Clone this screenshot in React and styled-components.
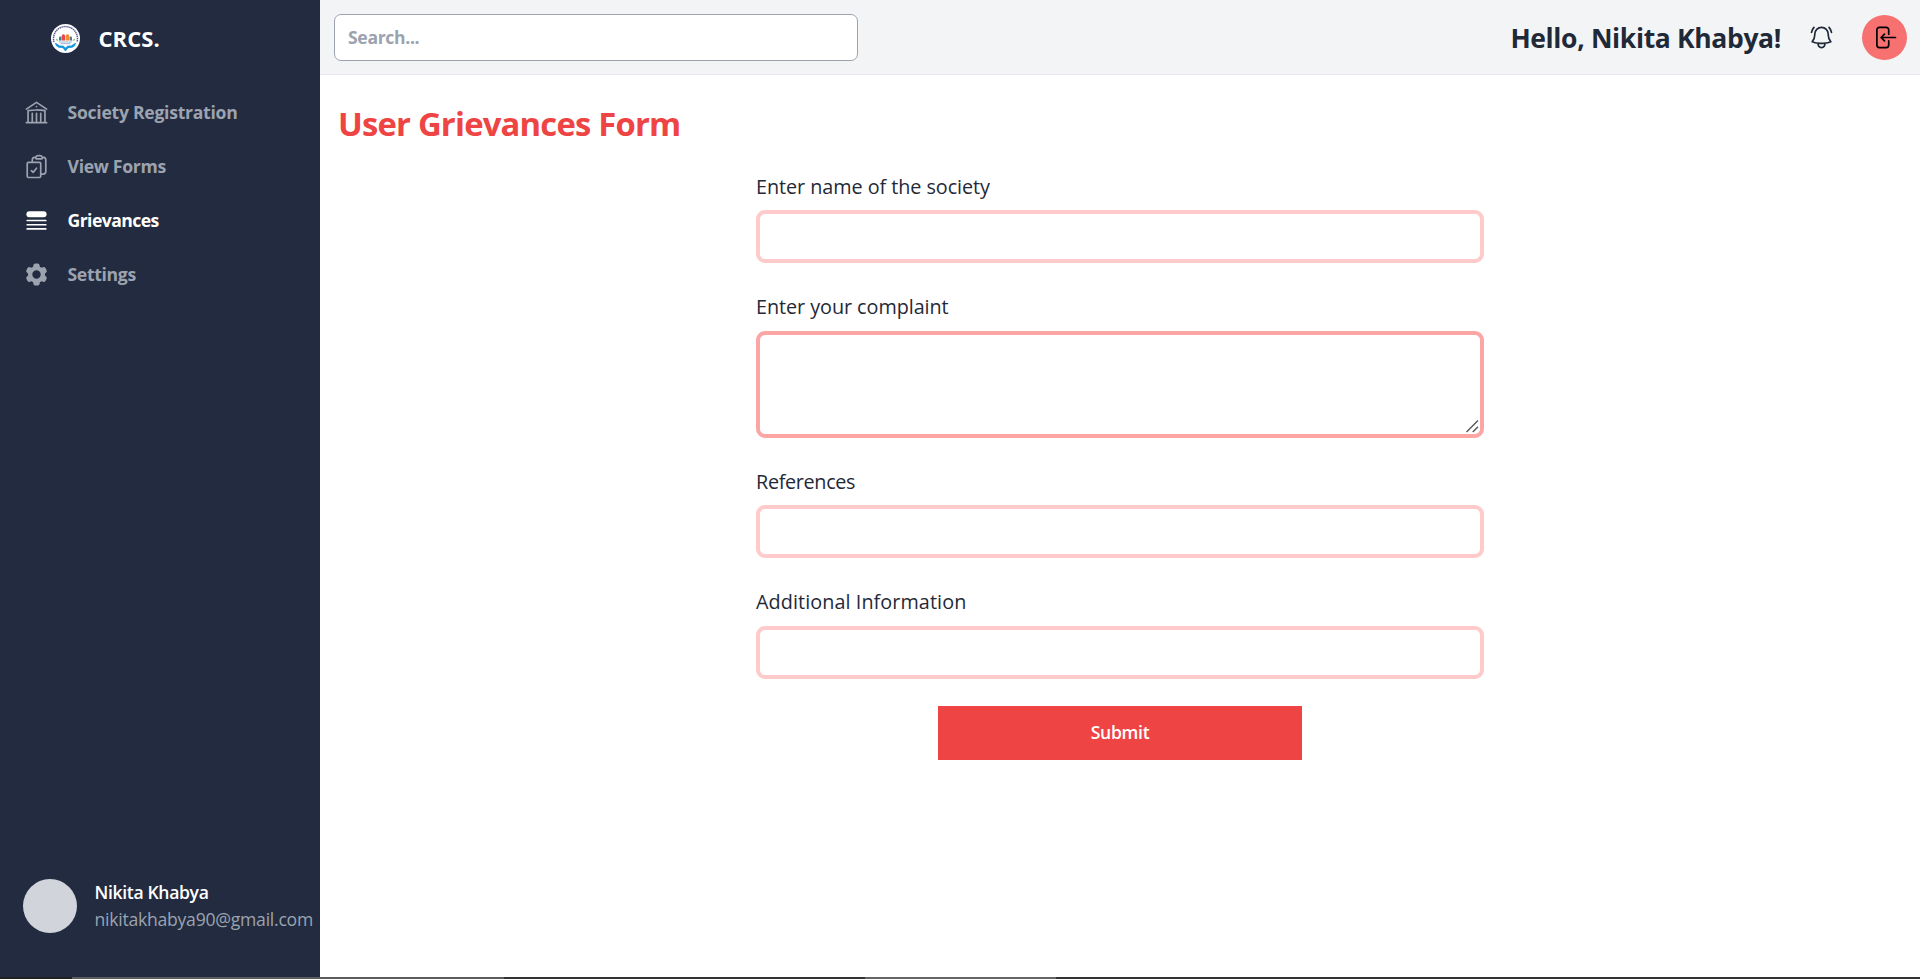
import React from "react";
import styled, { createGlobalStyle } from "styled-components";
import {
  HiOutlineBuildingLibrary,
  HiOutlineClipboardDocumentCheck,
  HiQueueList,
  HiCog6Tooth,
  HiOutlineBellAlert,
  HiOutlineArrowLeftOnRectangle,
} from "react-icons/hi2";

const GlobalStyle = createGlobalStyle`
  *, *::before, *::after { box-sizing: border-box; }
  body {
    margin: 0;
    background: #fff;
    font-family: "Segoe UI", "Open Sans", "Noto Sans", sans-serif;
    font-size: 17.6px;
    color: #1f2937;
    overflow: hidden;
  }
`;

const Page = styled.div`
  display: flex;
  flex-direction: column;
  height: 979px;
`;

const Shell = styled.div`
  display: flex;
  flex: 1;
  min-height: 0;
`;

const Sidebar = styled.aside`
  display: flex;
  flex-direction: column;
  width: 320px;
  flex-shrink: 0;
  background: #222b40;
`;

const Brand = styled.div`
  display: flex;
  align-items: center;
  gap: 18.5px;
  height: 76px;
  padding-left: 51px;
`;

const BrandName = styled.span`
  font-size: 22px;
  font-weight: 700;
  letter-spacing: 0.1px;
  color: #fff;
  line-height: 32px;
`;

const Nav = styled.nav`
  display: flex;
  flex-direction: column;
  margin-top: 9px;
`;

const NavItem = styled.a`
  display: flex;
  align-items: center;
  gap: 17.5px;
  height: 54px;
  padding-left: 23px;
  font-weight: 700;
  letter-spacing: ${(p) => p.$tracking}px;
  white-space: nowrap;
  color: ${(p) => (p.$active ? "#fff" : "#9ca3af")};

  svg {
    width: 27px;
    height: 27px;
    flex-shrink: 0;
  }
`;

const Profile = styled.div`
  display: flex;
  align-items: center;
  gap: 17.5px;
  margin-top: auto;
  padding: 0 0 44px 23px;
`;

const Avatar = styled.div`
  width: 54px;
  height: 54px;
  flex-shrink: 0;
  border-radius: 50%;
  background: #d1d5db;
`;

const ProfileText = styled.div`
  display: flex;
  flex-direction: column;
  line-height: 27px;
  white-space: nowrap;
`;

const ProfileName = styled.span`
  font-weight: 600;
  letter-spacing: -0.35px;
  color: #fff;
`;

const ProfileMail = styled.span`
  letter-spacing: -0.25px;
  color: #9ca3af;
`;

const Main = styled.main`
  flex: 1;
  min-width: 0;
`;

const Header = styled.header`
  display: flex;
  align-items: center;
  justify-content: space-between;
  height: 75px;
  padding: 0 13px 0 14px;
  background: #f3f4f6;
  border-bottom: 1px solid #e5e7eb;
`;

const Search = styled.input`
  width: 524px;
  height: 47px;
  padding: 0 13px;
  border: 1px solid #9ca3af;
  border-radius: 7px;
  background: #fff;
  font: inherit;
  font-weight: 700;
  letter-spacing: -0.35px;
  outline: none;

  &::placeholder {
    color: #9ca3af;
    opacity: 1;
  }
`;

const Actions = styled.div`
  display: flex;
  align-items: center;
  color: #1f2937;
`;

const Greeting = styled.span`
  padding-top: 2px;
  font-size: 26.5px;
  font-weight: 700;
  letter-spacing: -0.35px;
  white-space: nowrap;
`;

const BellButton = styled.button`
  display: flex;
  margin: 0 27px;
  padding: 0;
  border: 0;
  background: none;
  color: inherit;
`;

const LogoutButton = styled.button`
  display: flex;
  align-items: center;
  justify-content: center;
  width: 45px;
  height: 45px;
  padding: 0;
  border: 0;
  border-radius: 50%;
  background: #f87171;
  color: #000;
`;

const Title = styled.h1`
  margin: 25px 0 0 18px;
  font-size: 32.8px;
  line-height: 48px;
  font-weight: 700;
  letter-spacing: -0.8px;
  color: #ef4444;
`;

const Form = styled.form`
  display: flex;
  flex-direction: column;
  align-items: center;
  gap: 27px;
  width: 728px;
  margin: 21.5px auto 0;
`;

const Field = styled.label`
  display: flex;
  flex-direction: column;
  gap: 8px;
  width: 100%;
  padding-top: 1px;
`;

const LabelText = styled.span`
  font-size: 19.8px;
  line-height: 31.5px;
  font-weight: 500;
  letter-spacing: ${(p) => p.$tracking}px;
`;

const TextInput = styled.input`
  display: block;
  width: 100%;
  height: 53px;
  padding: 0 14px;
  border: 4px solid #fecaca;
  border-radius: 9px;
  background: #fff;
  font: inherit;
  outline: none;
`;

const TextAreaWrap = styled.div`
  position: relative;
`;

const TextArea = styled.textarea`
  display: block;
  width: 100%;
  height: 107px;
  padding: 9px 14px;
  border: 4px solid #fca5a5;
  border-radius: 9px;
  background: #fff;
  font: inherit;
  resize: none;
  outline: none;
`;

const Grip = styled.svg`
  position: absolute;
  right: 5px;
  bottom: 5px;
`;

const Submit = styled.button`
  width: 364px;
  height: 54px;
  padding: 0 0 2px;
  border: 0;
  background: #ef4444;
  color: #fff;
  font: inherit;
  font-weight: 600;
  letter-spacing: -0.3px;
`;

const Taskbar = styled.div`
  display: flex;
  height: 2px;
  flex-shrink: 0;
`;

const TaskSegment = styled.div`
  flex: ${(p) => (p.$width ? `0 0 ${p.$width}px` : "1")};
  background: ${(p) => p.$color};
`;

function Logo() {
  return (
    <svg width="29" height="29" viewBox="0 0 29 29">
      <circle cx="14.5" cy="14.5" r="14.5" fill="#fff" />
      <path d="M3 18A12 12 0 1 1 26 18" fill="none" stroke="#5a5a94" strokeWidth="1.5" strokeDasharray="1.4 .6" />
      <path d="M8 16.500v-2.800q0-1.300 1.200-1.300t1.200 1.300v2.800z" fill="#3f7f8c" />
      <path d="M18.600 16.500v-2.800q0-1.300 1.200-1.300t1.200 1.300v2.800z" fill="#5b7387" />
      <path d="M10.700 16.500v-4.200q0-2 1.700-2t1.700 2v4.200z" fill="#e5484d" />
      <path d="M14.700 16.500v-4.200q0-2 1.800-2t1.800 2v4.200z" fill="#f28a2e" />
      <path d="M5.200 14.600l2.500 1.900H5.600zM23.800 14.600l-2.500 1.900h2.100z" fill="#4caf50" />
      <path d="M8 18h13" stroke="#7fb5d8" strokeWidth=".9" />
      <path d="M9.500 19.700h10" stroke="#9a9ac4" strokeWidth=".8" />
      <path d="M3.600 18.800q2.800.6 5 2.600l3.800.4 2.100 2 2.100-2 3.800-.4q2.200-2 5-2.600-.9 3.400-4.200 4.900l-3.900.4-2.800 3.400-2.800-3.400-3.900-.4q-3.300-1.500-4.200-4.900z" fill="#1797dc" />
    </svg>
  );
}

const NAV = [
  { label: "Society Registration", icon: HiOutlineBuildingLibrary, tracking: -0.27 },
  { label: "View Forms", icon: HiOutlineClipboardDocumentCheck, tracking: -0.3 },
  { label: "Grievances", icon: HiQueueList, tracking: -0.57, active: true },
  { label: "Settings", icon: HiCog6Tooth, tracking: -0.33 },
];

const TASKS = [
  [72, "#222222"],
  [432, "#5c5c5c"],
  [361, "#333333"],
  [191, "#646464"],
  [0, "#333333"],
];

export default function App() {
  return (
    <Page>
      <GlobalStyle />
      <Shell>
        <Sidebar>
          <Brand>
            <Logo />
            <BrandName>CRCS.</BrandName>
          </Brand>
          <Nav>
            {NAV.map(({ label, icon: Icon, tracking, active }) => (
              <NavItem key={label} $tracking={tracking} $active={active}>
                <Icon />
                <span>{label}</span>
              </NavItem>
            ))}
          </Nav>
          <Profile>
            <Avatar />
            <ProfileText>
              <ProfileName>Nikita Khabya</ProfileName>
              <ProfileMail>nikitakhabya90@gmail.com</ProfileMail>
            </ProfileText>
          </Profile>
        </Sidebar>
        <Main>
          <Header>
            <Search placeholder="Search..." />
            <Actions>
              <Greeting>Hello, Nikita Khabya!</Greeting>
              <BellButton type="button" aria-label="Notifications">
                <HiOutlineBellAlert size={27} />
              </BellButton>
              <LogoutButton type="button" aria-label="Log out">
                <HiOutlineArrowLeftOnRectangle size={27} />
              </LogoutButton>
            </Actions>
          </Header>
          <Title>User Grievances Form</Title>
          <Form>
            <Field>
              <LabelText $tracking={-0.05}>Enter name of the society</LabelText>
              <TextInput />
            </Field>
            <Field>
              <LabelText $tracking={-0.05}>Enter your complaint</LabelText>
              <TextAreaWrap>
                <TextArea />
                <Grip width="14" height="14" viewBox="0 0 14 14" stroke="#555" strokeWidth="1.4">
                  <path d="M1.500 13L13 1.500M7.800 13L13 7.800" />
                </Grip>
              </TextAreaWrap>
            </Field>
            <Field>
              <LabelText $tracking={-0.32}>References</LabelText>
              <TextInput />
            </Field>
            <Field>
              <LabelText $tracking={0.08}>Additional Information</LabelText>
              <TextInput />
            </Field>
            <Submit type="button">Submit</Submit>
          </Form>
        </Main>
      </Shell>
      <Taskbar>
        {TASKS.map(([width, color], i) => (
          <TaskSegment key={i} $width={width} $color={color} />
        ))}
      </Taskbar>
    </Page>
  );
}
